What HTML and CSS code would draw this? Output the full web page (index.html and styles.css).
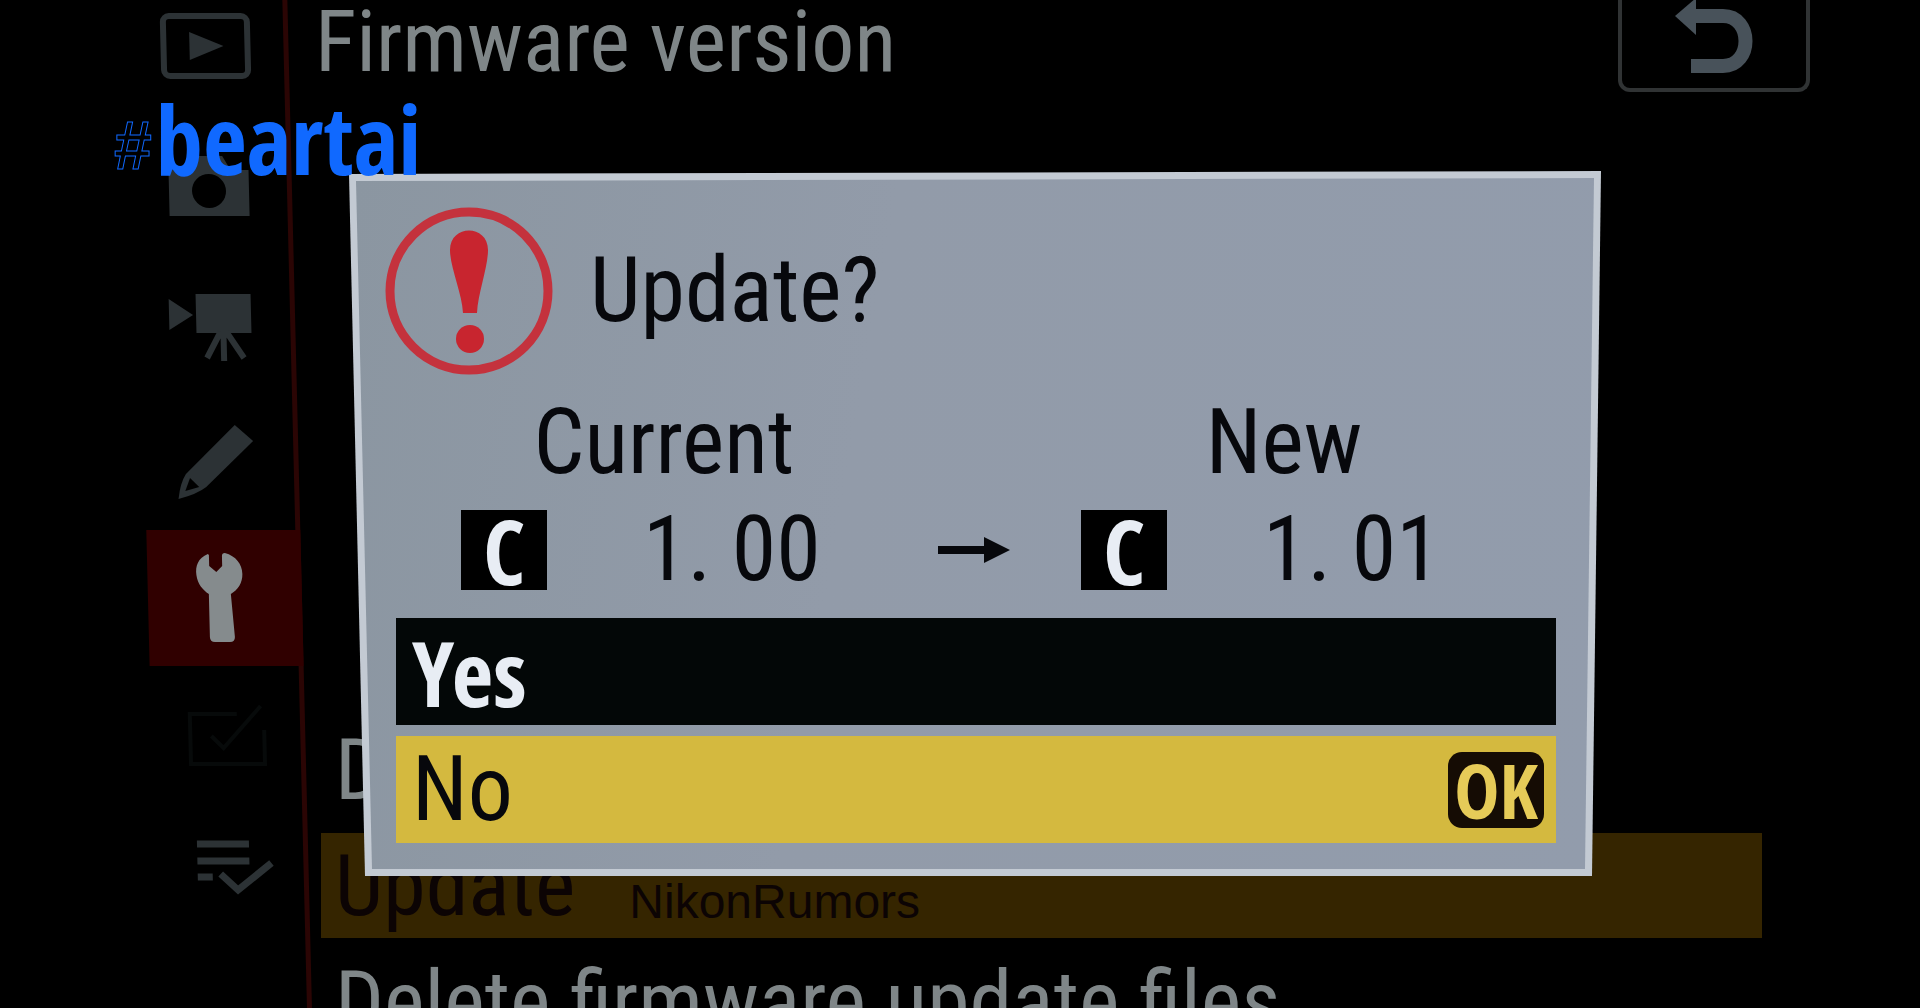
FILE: index.html
```
<!DOCTYPE html>
<html lang="en">
<head>
  <meta charset="UTF-8">
  <meta name="viewport" content="width=device-width, initial-scale=1.0">
  <title>Firmware version</title>
  <link rel="stylesheet" href="styles.css">
</head>
<body>
  <div class="screen">
    <nav class="sidebar" aria-label="Menu tabs">
      <button class="tab" aria-label="Playback">
        <svg width="92" height="68" viewBox="0 0 92 68">
          <rect x="4" y="4" width="84" height="60" rx="6" fill="none" stroke="currentColor" stroke-width="6"/>
          <path d="M30 20v28l34-14z" fill="currentColor"/>
        </svg>
      </button>
      <button class="tab" aria-label="Photo shooting">
        <svg width="80" height="64" viewBox="0 0 80 64">
          <path d="M0 12h20l8-14h26l8 14h18v46H0z" fill="currentColor"/>
          <circle cx="40" cy="33" r="17" fill="#000"/>
        </svg>
      </button>
      <button class="tab" aria-label="Movie shooting">
        <svg width="82" height="68" viewBox="2 0 82 68">
          <path d="M0 7v31l24-15zM27 2h55v39H27z" fill="currentColor"/>
          <path d="M54 40v29M51 40L37 66M57 40l17 26" fill="none" stroke="currentColor" stroke-width="6"/>
        </svg>
      </button>
      <button class="tab" aria-label="Custom settings">
        <svg width="76" height="74" viewBox="0 0 76 74">
          <path d="M58 0l18 16-48 46q-9 7-28 12 2-16 8-25z" fill="currentColor"/>
          <path d="M12 53l-5 13 14-4z" fill="#000"/>
        </svg>
      </button>
      <button class="tab active" aria-label="Setup">
        <svg width="48" height="92" viewBox="0 0 48 92">
          <path d="M14 2C4 6 1 14 2 23c1 9 6 15 12 19v43q0 5 5 5h15q5 0 5-5L36 42c7-4 12-11 12-20C48 12 42 4 31 1q-3 0-3 3v10l-6 6-7-6V3z" fill="currentColor"/>
        </svg>
      </button>
      <button class="tab disabled" aria-label="Retouch" disabled>
        <svg width="80" height="64" viewBox="-5 0 80 64">
          <path d="M50 12H3v50h74V28M24 34l12 12L74 4" fill="none" stroke="currentColor" stroke-width="4"/>
        </svg>
      </button>
      <button class="tab" aria-label="My menu">
        <svg width="76" height="58" viewBox="-10 2 76 58">
          <path d="M0 5h52M0 22h52M0 38h15M23 35l17 16 34-27" fill="none" stroke="currentColor" stroke-width="7"/>
        </svg>
      </button>
    </nav>

    <main class="content">
      <header class="header">
        <h1>Firmware version</h1>
        <button class="back" aria-label="Back">
          <svg width="78" height="74" viewBox="0 0 78 74">
            <path d="M16 66h32c30 0 30-50 0-50H18" fill="none" stroke="currentColor" stroke-width="14"/>
            <path d="M0 16L21-2v37z" fill="currentColor"/>
          </svg>
        </button>
      </header>
      <ul class="menu">
        <li>D</li>
        <li class="selected">Update <span class="credit">NikonRumors</span></li>
        <li>Delete firmware update files</li>
      </ul>
    </main>

    <div class="logo"><span class="hash">#</span>beartai</div>

    <section class="dialog" role="dialog" aria-labelledby="dialog-title">
      <div class="panel">
        <div class="dialog-head">
          <svg width="170" height="170" viewBox="0 0 170 170">
            <circle cx="85" cy="85" r="79" fill="none" stroke="#c4323d" stroke-width="9"/>
            <path d="M66 44c0-26 38-26 38 0 0 17-10 43-11 63H79C78 87 66 61 66 44z" fill="#c8252f"/>
            <circle cx="86" cy="133" r="14" fill="#c8252f"/>
          </svg>
          <h2 id="dialog-title">Update?</h2>
        </div>
        <div class="versions">
          <div class="version">
            <span class="label">Current</span>
            <span class="chip">C</span>
            <span class="number">1. 00</span>
          </div>
          <svg class="arrow" width="72" height="34" viewBox="0 0 72 34">
            <path d="M0 13h46V4l26 13-26 13V21H0z" fill="#07080c"/>
          </svg>
          <div class="version">
            <span class="label">New</span>
            <span class="chip">C</span>
            <span class="number">1. 01</span>
          </div>
        </div>
        <div class="options">
          <button class="option yes">Yes</button>
          <button class="option no">No <span class="ok">OK</span></button>
        </div>
      </div>
    </section>
  </div>
</body>
</html>
```
FILE: styles.css
```
:root {
  --icon: #2c3235;
  --text: #7f8688;
  --ink: #07080c;
  --panel: #929ba9;
  --yellow: #d4b93f;
  --bold-font: "Open Sans Condensed", "Open Sans", sans-serif;
}
* { box-sizing: border-box; }
body {
  margin: 0;
  background: #000;
  color: var(--text);
  font-family: "Roboto Condensed", "Roboto", sans-serif;
  font-size: 90px;
  line-height: 1;
}
button {
  border: none;
  background: none;
  color: inherit;
  font: inherit;
  padding: 0;
  cursor: pointer;
}
h1, h2 {
  margin: 0;
  font-size: inherit;
  font-weight: 400;
}
svg { display: block; flex: none; overflow: visible; }
.screen {
  position: relative;
  display: flex;
  height: 100vh;
  overflow: hidden;
}

/* tabs lean slightly to the right towards the bottom */
.sidebar {
  flex: none;
  width: 154px;
  height: 1040px;
  margin: -14px 0 0 133px;
  border-right: 5px solid #2b0504;
  transform: skewX(1.4deg);
  transform-origin: top left;
}
.tab {
  display: flex;
  align-items: center;
  justify-content: center;
  width: 154px;
  height: 136px;
  padding-right: 12px;
  color: var(--icon);
}
.tab:first-child { padding-bottom: 16px; }
.tab.active {
  background: #300000;
  color: #858b8d;
}
.tab.disabled { color: #070a0a; }

.content {
  flex: 1;
  padding: 0 158px 0 34px;
}
.header {
  display: flex;
  justify-content: space-between;
  margin: 0 -48px 0 -6px;
}
.header h1 {
  font-size: 86px;
  line-height: 84px;
}
.back {
  display: flex;
  justify-content: center;
  width: 192px;
  height: 92px;
  border: 4px solid #303334;
  border-top: none;
  border-radius: 0 0 12px 12px;
  color: #48525a;
}
.menu {
  display: flex;
  flex-direction: column;
  gap: 11px;
  margin: 625px 0 0;
  padding: 0;
  font-size: 86px;
  list-style: none;
}
.menu li {
  display: flex;
  align-items: center;
  height: 105px;
  padding-left: 14px;
  white-space: nowrap;
}
.menu .selected {
  background: #352500;
  color: #0c0404;
}
.credit {
  margin: 32px 0 0 54px;
  font-family: "Liberation Sans", sans-serif;
  font-size: 48px;
}

.logo {
  position: absolute;
  z-index: 2;
  top: 91px;
  left: 114px;
  display: flex;
  align-items: center;
  gap: 4px;
  color: #1069ff;
  font-family: var(--bold-font);
  font-size: 95px;
  font-weight: 700;
}
.hash {
  margin-top: 12px;
  color: transparent;
  font-size: 68px;
  font-family: "Liberation Sans", sans-serif;
  -webkit-text-stroke: 1px #1069ff;
}

.dialog {
  position: absolute;
  top: 171px;
  left: 349px;
  right: 319px;
  padding: 7px;
  background: #c3cad3;
  clip-path: polygon(0 3px, 100% 0, calc(100% - 9px) 100%, 16px 100%);
  color: var(--ink);
}
.panel {
  padding: 28px 38px 26px 28px;
  background: linear-gradient(100deg, #8b96a1, var(--panel) 40%, #929cac);
  clip-path: polygon(0 3px, 100% 0, calc(100% - 9px) 100%, 16px 100%);
}
.dialog-head {
  display: flex;
  align-items: center;
  gap: 36px;
}
.versions {
  display: grid;
  grid-template-columns: 477px 143px 1fr;
  align-items: end;
  padding: 22px 0 28px 77px;
}
.version {
  display: grid;
  grid-template-columns: 86px 172px;
  column-gap: 96px;
  row-gap: 14px;
  align-items: end;
}
.label {
  grid-column: 1 / -1;
  padding-left: 52px;
  text-align: center;
}
.number { white-space: nowrap; }
.chip {
  height: 80px;
  background: #000;
  color: #e8edf4;
  font-family: var(--bold-font);
  font-weight: 700;
  line-height: 80px;
  text-align: center;
}
.number { line-height: 80px; }
.arrow { margin-bottom: 23px; }
.options {
  display: flex;
  flex-direction: column;
  gap: 11px;
  margin-left: 12px;
}
.version .label { margin-bottom: 8px; }
.option {
  display: flex;
  align-items: center;
  justify-content: space-between;
  height: 107px;
  padding: 0 12px 0 16px;
}
.yes {
  background: #030707;
  color: #e8edf4;
  font-family: var(--bold-font);
  font-weight: 700;
}
.no { background: var(--yellow); }
.ok {
  padding: 0 6px;
  border-radius: 14px;
  background: #150c04;
  color: #e6cb58;
  font-family: var(--bold-font);
  font-size: 76px;
  font-weight: 700;
}
```
